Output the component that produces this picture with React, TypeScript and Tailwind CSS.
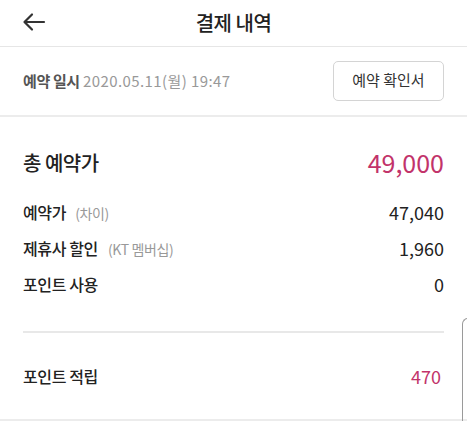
export default function App() {
  const font = { fontFamily: '"Noto Sans CJK KR", "Noto Sans", sans-serif' };
  return (
    <div className="relative h-[421px] w-[467px] overflow-hidden bg-white text-[#222]" style={font}>
      {/* header */}
      <div className="relative flex h-[47px] items-center justify-center border-b border-[#e6e6e6]">
        <button className="absolute left-[20px] top-[10px] p-[2px]">
          <svg width="24" height="20" viewBox="0 0 24 20" fill="none" stroke="#333" strokeWidth="2.2" strokeLinecap="round" strokeLinejoin="round">
            <path d="M22 10H3" />
            <path d="M10 2.5L2.5 10L10 17.5" />
          </svg>
        </button>
        <h1 className="text-[20px] font-medium tracking-tight text-[#222]">결제 내역</h1>
      </div>

      {/* reservation date */}
      <div className="flex h-[70px] items-center justify-between border-b-2 border-[#ececec] pl-[23px] pr-[23px]">
        <p className="text-[15px] text-[#999]">
          <span className="font-bold tracking-tight text-[#555]">예약 일시</span>{' '}
          <span className="tracking-[0.4px]">2020.05.11(월) 19:47</span>
        </p>
        <button className="mt-[-1px] flex h-[40px] w-[111px] items-center justify-center rounded-[5px] border border-[#d4d4d4] text-[15px] text-[#333]">
          예약 확인서
        </button>
      </div>

      {/* prices */}
      <div className="px-[23px]">
        <div className="mt-[22px] flex h-[48px] items-center justify-between">
          <span className="text-[20px] font-medium tracking-tight">총 예약가</span>
          <span className="text-[25px] text-[#c2336a]">49,000</span>
        </div>
        <div className="mt-[7px] flex h-[36px] items-center justify-between">
          <span className="text-[16px] font-medium tracking-tight">
            예약가 <span className="ml-[6px] text-[14px] font-normal text-[#999]">(차이)</span>
          </span>
          <span className="text-[18px]">47,040</span>
        </div>
        <div className="flex h-[36px] items-center justify-between">
          <span className="text-[16px] font-medium tracking-tight">
            제휴사 할인 <span className="ml-[7px] text-[14px] font-normal text-[#999]">(KT 멤버십)</span>
          </span>
          <span className="text-[18px]">1,960</span>
        </div>
        <div className="flex h-[36px] items-center justify-between">
          <span className="text-[16px] font-medium tracking-tight">포인트 사용</span>
          <span className="text-[18px]">0</span>
        </div>
        <div className="mt-[29px] border-t-2 border-[#e8e8e8]" />
        <div className="flex h-[86px] items-center justify-between pr-[3px]">
          <span className="text-[16px] font-medium tracking-tight">포인트 적립</span>
          <span className="text-[18px] text-[#c2336a]">470</span>
        </div>
      </div>
      <div className="border-t-2 border-[#ececec]" />

      {/* edge of next card */}
      <div className="absolute left-[462px] top-[318px] h-[120px] w-[20px] rounded-tl-[6px] border-l border-t border-[#9a9a9a]" />
    </div>
  );
}
